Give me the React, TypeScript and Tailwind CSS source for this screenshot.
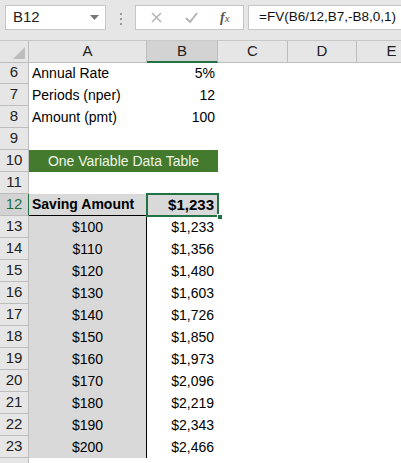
import React from "react";

const font = { fontFamily: '"Liberation Sans", Arial, sans-serif' };

type Row = { n: number; a?: string; b?: string };

const topRows: Row[] = [
  { n: 6, a: "Annual Rate", b: "5%" },
  { n: 7, a: "Periods (nper)", b: "12" },
  { n: 8, a: "Amount (pmt)", b: "100" },
  { n: 9 },
];

const tableRows: Row[] = [
  { n: 13, a: "$100", b: "$1,233" },
  { n: 14, a: "$110", b: "$1,356" },
  { n: 15, a: "$120", b: "$1,480" },
  { n: 16, a: "$130", b: "$1,603" },
  { n: 17, a: "$140", b: "$1,726" },
  { n: 18, a: "$150", b: "$1,850" },
  { n: 19, a: "$160", b: "$1,973" },
  { n: 20, a: "$170", b: "$2,096" },
  { n: 21, a: "$180", b: "$2,219" },
  { n: 22, a: "$190", b: "$2,343" },
  { n: 23, a: "$200", b: "$2,466" },
];

function RowHead({ n, active }: { n?: number; active?: boolean }) {
  return (
    <div
      className={`flex h-[22px] w-[29px] shrink-0 items-center justify-center border-b border-r text-[15px] ${
        active
          ? "border-b-[#bdbdbd] border-r-[#217346] bg-[#d3d3d3] text-[#217346]"
          : "border-[#bdbdbd] bg-[#e6e6e6] text-[#222]"
      }`}
    >
      {n}
    </div>
  );
}

function Toolbar() {
  return (
    <div className="flex h-[40px] items-start bg-[#e6e6e6] pt-[5px]">
      <div className="ml-[5px] flex h-[25px] w-[101px] shrink-0 items-center justify-between border border-[#c6c6c6] bg-white pl-[7px] pr-[6px] text-[15px] text-[#222]">
        <span>B12</span>
        <svg width="9" height="5" viewBox="0 0 9 5">
          <path d="M0 0h9L4.5 5z" fill="#777" />
        </svg>
      </div>
      <div className="ml-[14px] mt-[8px] flex shrink-0 flex-col gap-[3px]">
        <span className="h-[2px] w-[2px] bg-[#9a9a9a]" />
        <span className="h-[2px] w-[2px] bg-[#9a9a9a]" />
        <span className="h-[2px] w-[2px] bg-[#9a9a9a]" />
      </div>
      <div className="ml-[13px] flex h-[25px] w-[109px] shrink-0 items-center border border-[#c6c6c6] bg-white">
        <svg className="ml-[15px]" width="11" height="11" viewBox="0 0 11 11">
          <path d="M1 1l9 9M10 1l-9 9" stroke="#b4b4b4" strokeWidth="1.5" />
        </svg>
        <svg className="ml-[23px]" width="13" height="11" viewBox="0 0 13 11">
          <path d="M1 6l4 4 7-9" stroke="#b4b4b4" strokeWidth="2" fill="none" />
        </svg>
        <span
          className="ml-[22px] text-[14px] italic text-[#555]"
          style={{ fontFamily: '"Liberation Serif", serif' }}
        >
          <b>f</b>
          <span className="text-[11px]">x</span>
        </span>
      </div>
      <div className="ml-[4px] flex h-[25px] min-w-0 flex-1 items-center overflow-hidden whitespace-nowrap border border-r-0 border-[#c6c6c6] bg-white pl-[10px] text-[13.5px] text-[#111]">
        =FV(B6/12,B7,-B8,0,1)
      </div>
    </div>
  );
}

function ColHeads() {
  const cols = [
    { l: "A", w: "w-[118px]" },
    { l: "B", w: "w-[71px]", active: true },
    { l: "C", w: "w-[70px]" },
    { l: "D", w: "w-[69px]" },
    { l: "E", w: "w-[70px]" },
  ];
  return (
    <div className="flex h-[22px] border-t border-[#c8c8c8]">
      <div className="relative h-[22px] w-[29px] shrink-0 border-b border-r border-[#bdbdbd] bg-[#e6e6e6]">
        <svg className="absolute bottom-[3px] right-[3px]" width="12" height="12" viewBox="0 0 12 12">
          <path d="M12 0V12H0z" fill="#bdbdbd" />
        </svg>
      </div>
      {cols.map((c) => (
        <div
          key={c.l}
          className={`flex h-[22px] shrink-0 items-center justify-center border-r text-[15px] ${c.w} ${
            c.active
              ? "border-b-2 border-b-[#217346] border-r-[#bdbdbd] bg-[#d3d3d3] text-[#222]"
              : "border-b border-[#bdbdbd] bg-[#e6e6e6] text-[#222]"
          }`}
        >
          {c.l}
        </div>
      ))}
    </div>
  );
}

export default function App() {
  return (
    <div className="h-[463px] w-[401px] overflow-hidden bg-white" style={font}>
      <Toolbar />
      <ColHeads />

      {topRows.map((r) => (
        <div key={r.n} className="flex">
          <RowHead n={r.n} />
          <div className="flex h-[22px] w-[118px] items-center pl-[3px] text-[14px] text-black">{r.a}</div>
          <div className="flex h-[22px] w-[71px] items-center justify-end pr-[3px] text-[14px] text-black">{r.b}</div>
        </div>
      ))}

      <div className="flex">
        <RowHead n={10} />
        <div className="flex h-[22px] w-[189px] items-center justify-center bg-[#447a2e] text-[14px] text-[#eef4e8]">
          One Variable Data Table
        </div>
      </div>

      <div className="flex">
        <RowHead n={11} />
      </div>

      <div className="flex">
        <RowHead n={12} active />
        <div className="flex h-[22px] w-[118px] items-center border-b border-r border-black bg-[#d9d9d9] pl-[3px] text-[14px] font-bold text-black">
          Saving Amount
        </div>
        <div className="relative flex h-[22px] w-[71px] items-center justify-end bg-[#d9d9d9] pr-[4px] text-[15px] font-bold text-black">
          $1,233
          <div className="pointer-events-none absolute -left-[1px] -top-[1px] h-[24px] w-[73px] border-2 border-[#217346]" />
          <div className="absolute -bottom-[4px] -right-[5px] h-[6px] w-[6px] border border-white bg-[#217346]" />
        </div>
      </div>

      {tableRows.map((r) => (
        <div key={r.n} className="flex">
          <RowHead n={r.n} />
          <div className="flex h-[22px] w-[118px] items-center justify-center border-r border-black bg-[#d9d9d9] text-[14px] text-black">
            {r.a}
          </div>
          <div className="flex h-[22px] w-[71px] items-center justify-end pr-[4px] text-[14px] text-black">{r.b}</div>
        </div>
      ))}

      <div className="flex">
        <RowHead />
      </div>
    </div>
  );
}
